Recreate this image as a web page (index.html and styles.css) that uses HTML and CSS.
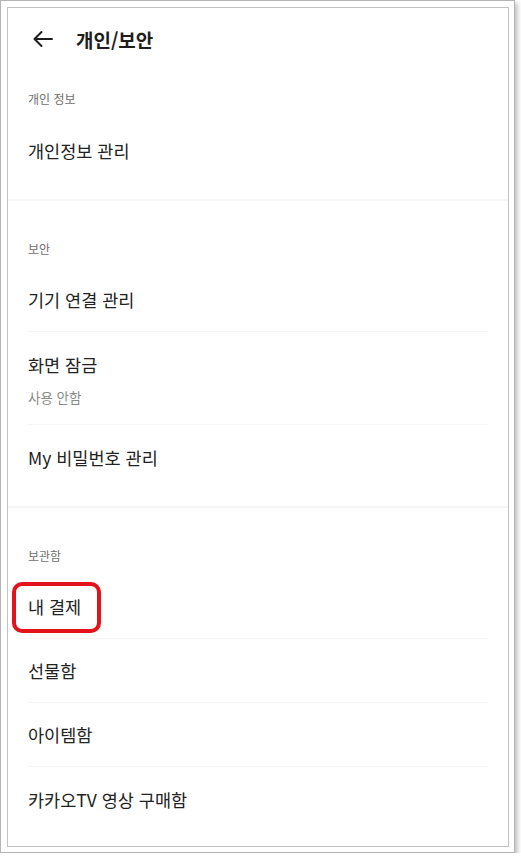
FILE: index.html
```html
<!DOCTYPE html>
<html lang="ko">
<head>
    <meta charset="UTF-8">
    <meta name="viewport" content="width=device-width, initial-scale=1.0">
    <title>개인/보안</title>
    <link rel="stylesheet" href="styles.css">
</head>
<body>
    <div class="frame">
        <div class="screen">
            <div class="topbar">
                <svg class="back" width="24" height="24" viewBox="0 0 24 24">
                    <path d="M21 12H3.5M10.5 5l-7 7 7 7" fill="none" stroke="#1e1e1e" stroke-width="2" stroke-linecap="round" stroke-linejoin="round"/>
                </svg>
                <h1>개인/보안</h1>
            </div>

            <div class="section first">
                <div class="section-title">개인 정보</div>
                <div class="item">개인정보 관리</div>
            </div>

            <div class="section">
                <div class="section-title">보안</div>
                <div class="item">기기 연결 관리</div>
                <div class="item tall">
                    <span>화면 잠금</span>
                    <span class="sub">사용 안함</span>
                </div>
                <div class="item">My 비밀번호 관리</div>
            </div>

            <div class="section last">
                <div class="section-title">보관함</div>
                <div class="item marked">내 결제<span class="mark"></span></div>
                <div class="item">선물함</div>
                <div class="item">아이템함</div>
                <div class="item">카카오TV 영상 구매함</div>
            </div>
        </div>
    </div>
</body>
</html>
```

FILE: styles.css
```css
* {
    margin: 0;
    padding: 0;
    box-sizing: border-box;
}

body {
    font-family: 'Noto Sans CJK KR', 'Noto Sans', sans-serif;
    background: white;
    color: #1e1e1e;
}

.frame {
    width: 515px;
    height: 853px;
    border: 1px solid #b4b4b4;
    padding: 6px 5px 5px 6px;
    background: white;
    box-shadow: 3px 3px 4px rgba(0, 0, 0, 0.22);
}

.screen {
    height: 100%;
    border: 1px solid #c2c2c2;
    overflow: hidden;
}

.topbar {
    height: 62px;
    display: flex;
    align-items: center;
    padding-left: 23px;
}

.back {
    margin-right: 21px;
}

.topbar h1 {
    font-size: 19px;
    font-weight: 700;
}

.section {
    border-bottom: 2px solid #f5f5f5;
    padding-bottom: 17px;
}

.section.last {
    border-bottom: none;
}

.section-title {
    font-size: 12px;
    color: #6f6f6f;
    line-height: 18px;
    padding: 39px 20px 10px;
}

.section.first .section-title {
    padding-top: 20px;
}

.item {
    position: relative;
    min-height: 64px;
    margin: 0 20px;
    display: flex;
    align-items: center;
    font-size: 17.5px;
    color: #222;
    border-bottom: 1px solid #f5f5f5;
}

.item:last-child {
    border-bottom: none;
}

.item.tall {
    min-height: 92px;
    flex-direction: column;
    align-items: flex-start;
    justify-content: flex-start;
    padding: 20px 0 17px;
    line-height: 26px;
}

.sub {
    font-size: 13.5px;
    color: #8a8a8a;
    line-height: 20px;
    margin-top: 9px;
}

.mark {
    position: absolute;
    left: -16px;
    top: 7px;
    width: 89px;
    height: 51px;
    border: 4px solid #e3121b;
    border-radius: 10px;
}
```
